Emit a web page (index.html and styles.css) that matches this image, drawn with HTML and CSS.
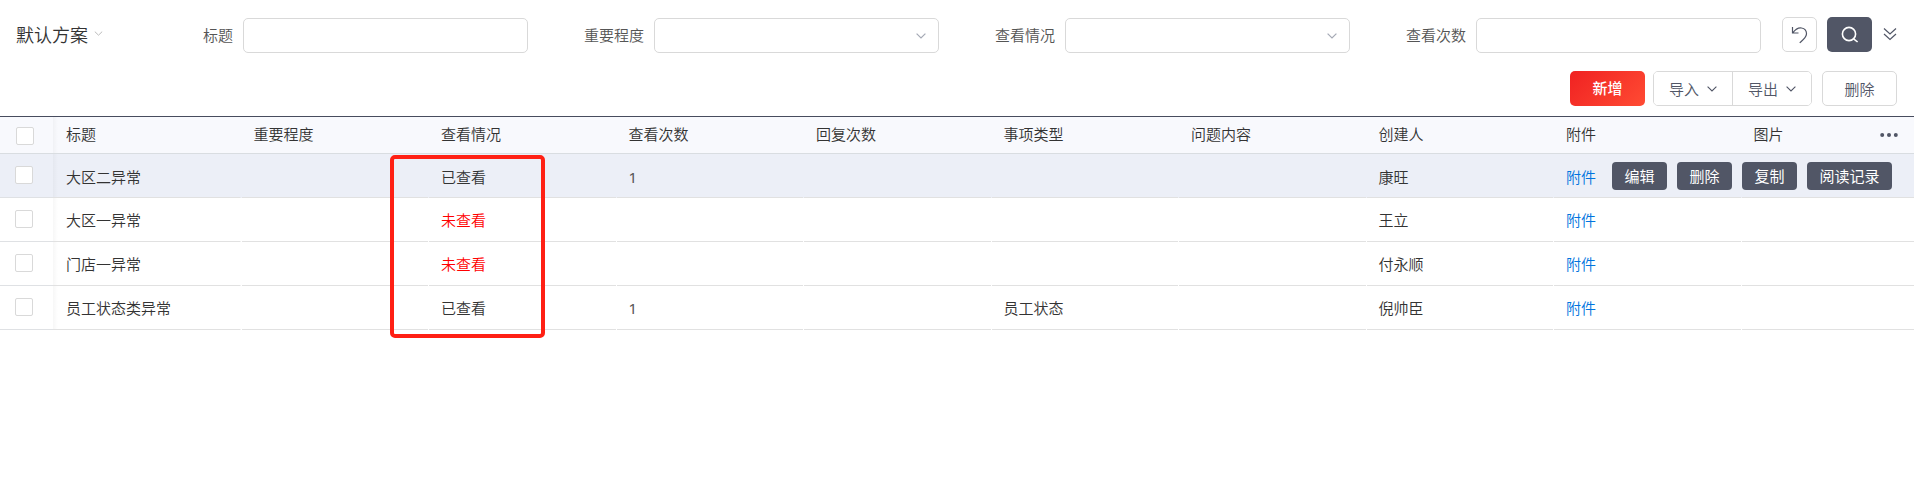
FILE: index.html
```
<!DOCTYPE html>
<html lang="zh-CN">
<head>
<meta charset="utf-8">
<title>默认方案</title>
<link rel="stylesheet" href="styles.css">
</head>
<body>
<header class="filters">
  <div class="scheme">默认方案<svg class="scheme-arrow" width="9" height="5" viewBox="0 0 9 5"><path d="M.8.6 4.5 4.2 8.2.6"/></svg></div>
  <div class="field"><label>标题</label><div class="input"></div></div>
  <div class="field"><label>重要程度</label><div class="input"><svg class="arrow" width="10" height="6" viewBox="0 0 10 6"><path d="M.6.6 5 5 9.4.6"/></svg></div></div>
  <div class="field"><label>查看情况</label><div class="input"><svg class="arrow" width="10" height="6" viewBox="0 0 10 6"><path d="M.6.6 5 5 9.4.6"/></svg></div></div>
  <div class="field"><label>查看次数</label><div class="input"></div></div>
  <div class="tools">
    <button class="reset"><svg width="17" height="18" viewBox="0 0 17 18"><path d="M1.5 1v6h6M1.800 6.800C4.500 3.200 7.500 1.500 10.500 2c3.200.5 5 3 5 5.800 0 3.700-3.500 6.200-6.800 9"/></svg></button>
    <button class="search"><svg width="18" height="18" viewBox="0 0 18 18"><circle cx="8" cy="8" r="6.600"/><path d="m12.600 12.800 4 3.200"/></svg></button>
    <svg class="more" width="14" height="14" viewBox="0 0 14 14"><path d="m1 1.500 6 5.500 6-5.500M1 7l6 5.500L13 7"/></svg>
  </div>
</header>
<div class="actions">
  <button class="btn primary">新增</button>
  <div class="group">
    <button>导入<svg width="10" height="6" viewBox="0 0 10 6"><path d="M.6.6 5 5 9.400.6"/></svg></button>
    <button>导出<svg width="10" height="6" viewBox="0 0 10 6"><path d="M.6.6 5 5 9.400.6"/></svg></button>
  </div>
  <button class="btn">删除</button>
</div>
<main class="table">
  <div class="row head">
    <div class="check"><i></i></div>
    <div class="cell">标题</div><div class="cell">重要程度</div><div class="cell">查看情况</div><div class="cell">查看次数</div><div class="cell">回复次数</div><div class="cell">事项类型</div><div class="cell">问题内容</div><div class="cell">创建人</div><div class="cell">附件</div><div class="cell">图片</div>
    <svg class="dots" width="18" height="4" viewBox="0 0 18 4"><circle cx="2.200" cy="2" r="2"/><circle cx="9" cy="2" r="2"/><circle cx="15.800" cy="2" r="2"/></svg>
  </div>
  <div class="row active">
    <div class="check"><i></i></div>
    <div class="cell">大区二异常</div><div class="cell"></div><div class="cell">已查看</div><div class="cell num">1</div><div class="cell"></div><div class="cell"></div><div class="cell"></div><div class="cell">康旺</div><div class="cell link">附件</div><div class="cell"></div>
    <div class="row-actions"><button>编辑</button><button>删除</button><button>复制</button><button>阅读记录</button></div>
  </div>
  <div class="row">
    <div class="check"><i></i></div>
    <div class="cell">大区一异常</div><div class="cell"></div><div class="cell unread">未查看</div><div class="cell"></div><div class="cell"></div><div class="cell"></div><div class="cell"></div><div class="cell">王立</div><div class="cell link">附件</div><div class="cell"></div>
  </div>
  <div class="row">
    <div class="check"><i></i></div>
    <div class="cell">门店一异常</div><div class="cell"></div><div class="cell unread">未查看</div><div class="cell"></div><div class="cell"></div><div class="cell"></div><div class="cell"></div><div class="cell">付永顺</div><div class="cell link">附件</div><div class="cell"></div>
  </div>
  <div class="row">
    <div class="check"><i></i></div>
    <div class="cell">员工状态类异常</div><div class="cell"></div><div class="cell">已查看</div><div class="cell num">1</div><div class="cell"></div><div class="cell">员工状态</div><div class="cell"></div><div class="cell">倪帅臣</div><div class="cell link">附件</div><div class="cell"></div>
  </div>
  <div class="highlight"></div>
</main>
</body>
</html>
```
FILE: styles.css
```
* { box-sizing: border-box; }
body {
  margin: 0;
  height: 483px;
  overflow: hidden;
  background: #fff;
  color: #333;
  font: 350 15px/20px "Noto Sans CJK SC", "Noto Sans", sans-serif;
}
button {
  margin: 0;
  padding: 0;
  font: inherit;
  color: #515666;
  background: #fff;
  border: 1px solid #d9d9d9;
}
svg { display: block; fill: none; stroke: #515666; stroke-width: 1.2; flex: none; }

.filters { display: flex; height: 71px; padding: 17px 0 0 16px; }
.scheme { display: flex; width: 102px; height: 35px; padding-bottom: 1px; align-items: center; font-size: 18px; white-space: nowrap; }
.scheme-arrow { margin: 0 0 1px 6px; stroke: #bbb; stroke-width: 1; }
.field { display: flex; width: 411px; height: 35px; margin-top: 1px; align-items: center; justify-content: flex-end; color: #555; }
.field label { margin: 0 10px 1px 0; }
.input { display: flex; width: 285px; height: 35px; margin-right: 1px; padding-right: 12px; align-items: center; justify-content: flex-end; border: 1px solid #d9d9d9; border-radius: 5px; }
.arrow { stroke: #a5a9b5; }
.tools { display: flex; height: 35px; margin-left: 20px; gap: 10px; align-items: center; }
.tools button { display: flex; height: 35px; align-items: center; justify-content: center; border-radius: 5px; }
.reset { width: 35px; }
.tools .search { width: 45px; background: #515666; border: 0; }
.search svg { stroke: #fff; stroke-width: 1.6; }
.more { margin: 0 0 1px 1px; }

.actions { display: flex; height: 45px; padding-right: 17px; justify-content: flex-end; align-items: flex-start; }
.btn { width: 75px; height: 35px; border-radius: 5px; }
.primary { margin-right: 8px; padding-bottom: 1px; color: #fff; font-weight: 500; border: 0; background: linear-gradient(135deg, #f02222, #ff4b33); }
.group { display: flex; width: 159px; height: 35px; margin-right: 10px; border: 1px solid #d9d9d9; border-radius: 5px; overflow: hidden; }
.group button { display: flex; flex: 1; gap: 8px; align-items: center; justify-content: center; border: 0; }
.group svg { stroke-width: 1.1; }
.group button + button { border-left: 1px solid #d9d9d9; }

.table { position: relative; border-top: 1px solid #474c5e; }
.row { display: flex; position: relative; height: 44px; overflow: hidden; }
.check { display: flex; flex: none; width: 53px; padding: 12px 0 0 15px; border-bottom: 1px solid #dfe1e4; }
.check i { width: 18px; height: 18px; background: #fff; border: 1px solid #d9d9d9; border-radius: 2px; }
.cell {
  flex: none;
  width: 187.5px;
  padding: 12px 0 0 13px;
  white-space: nowrap;
  background: linear-gradient(#e1e1e1, #e1e1e1) right bottom / calc(100% - 1px) 1px no-repeat;
}
.row .check + .cell {
  background:
    linear-gradient(#e1e1e1, #e1e1e1) right bottom / 100% 1px no-repeat,
    linear-gradient(90deg, rgba(0,0,0,.03), transparent 5px);
}
.head { height: 37px; background: #f8f9fd; border-bottom: 1px solid #d9dde1; }
.head .check { padding: 10px 0 0 16px; border: 0; }
.head .cell { padding-top: 7px; background: none; }
.head .check + .cell { background: linear-gradient(90deg, rgba(0,0,0,.03), transparent 5px); }
.active { background: #eceff7; }
.active .cell { padding-top: 13px; }
.num { color: #555; font-family: "Noto Sans", "Noto Sans CJK SC", sans-serif; font-weight: 400; }
.link { color: #0074de; }
.unread { color: #f00; }
.dots { position: absolute; top: 16px; right: 16px; fill: #515666; stroke: none; }
.row-actions { position: absolute; display: flex; gap: 10px; top: 8px; right: 22px; }
.row-actions button { height: 28px; padding: 0 12.5px 1px; color: #fff; font-weight: 400; background: #515666; border: 0; border-radius: 4px; }
.highlight { position: absolute; left: 390px; top: 38px; width: 155px; height: 183px; border: 4px solid #ff2014; border-radius: 5px; }
```
